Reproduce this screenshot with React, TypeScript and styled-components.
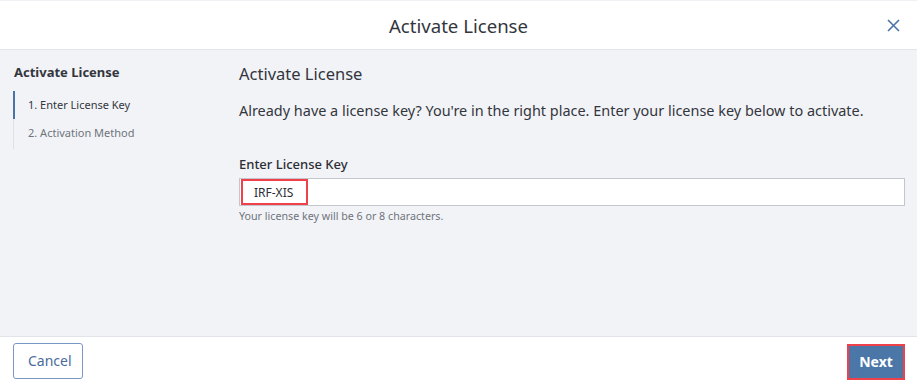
import styled, { createGlobalStyle } from 'styled-components'

const GlobalStyle = createGlobalStyle`
  html, body {
    margin: 0;
    padding: 0;
    background: #ffffff;
  }
  body {
    font-family: 'Noto Sans', 'Open Sans', sans-serif;
    color: #333740;
  }
`

const StyledDialog = styled.div`
  width: 917px;
  height: 384px;
  display: flex;
  flex-direction: column;
  background: #ffffff;
  overflow: hidden;
`

const StyledHeader = styled.header`
  height: 50px;
  flex-shrink: 0;
  display: flex;
  align-items: center;
  justify-content: center;
  position: relative;
  border-top: 1px solid #f0f1f4;
  border-bottom: 1px solid #e2e4e9;
  box-sizing: border-box;
`

const StyledTitle = styled.h1`
  margin: 0;
  font-size: 18.6px;
  font-weight: 400;
  color: #33363d;
`

const StyledClose = styled.button`
  position: absolute;
  right: 14px;
  top: 14px;
  width: 20px;
  height: 20px;
  padding: 0;
  border: none;
  background: none;
  display: flex;
  align-items: center;
  justify-content: center;
  color: #4a74a8;
  cursor: pointer;
`

const StyledBody = styled.div`
  flex: 1;
  display: flex;
  background: #f2f3f7;
  padding: 13px 12px 0 13px;
`

const StyledNav = styled.nav`
  width: 226px;
  flex-shrink: 0;
`

const StyledNavTitle = styled.div`
  font-size: 13px;
  font-weight: 700;
  color: #33363d;
  padding-left: 1px;
  margin-bottom: 10px;
  line-height: 18px;
`

const StyledSteps = styled.ol`
  list-style: none;
  margin: 0;
  padding: 0 0 2px;
  border-left: 1px solid #dfe1e6;
`

const StyledStep = styled.li<{ $active?: boolean }>`
  font-size: 11px;
  line-height: 14px;
  padding: 7px 0 7px 13px;
  margin-left: -1px;
  border-left: 2px solid ${(p) => (p.$active ? '#4a74a8' : 'transparent')};
  color: ${(p) => (p.$active ? '#33363d' : '#6f737c')};
`

const StyledMain = styled.main`
  flex: 1;
  display: flex;
  flex-direction: column;
`

const StyledHeading = styled.h2`
  margin: 0;
  font-size: 16.5px;
  font-weight: 400;
  color: #33363d;
  line-height: 22px;
`

const StyledLead = styled.p`
  margin: 16px 0 0;
  font-size: 14.45px;
  line-height: 20px;
  color: #33363d;
`

const StyledLabel = styled.label`
  margin-top: 34px;
  font-size: 13px;
  font-weight: 500;
  line-height: 18px;
  color: #2b2e34;
`

const StyledInputWrap = styled.div`
  margin-top: 5px;
  height: 28px;
  box-sizing: border-box;
  border: 1px solid #c3c6cc;
  background: #ffffff;
  display: flex;
  align-items: center;
  position: relative;
`

const StyledInputValue = styled.span`
  font-size: 12px;
  color: #2b2e34;
  padding-left: 14px;
`

const StyledHighlight = styled.span`
  position: absolute;
  left: 1px;
  top: 0px;
  width: 67px;
  height: 26px;
  box-sizing: border-box;
  border: 2px solid #f0414a;
`

const StyledHelp = styled.div`
  margin-top: 3px;
  font-size: 10.7px;
  line-height: 14px;
  color: #6f737c;
`

const StyledFooter = styled.footer`
  height: 48px;
  flex-shrink: 0;
  display: flex;
  align-items: center;
  justify-content: space-between;
  padding: 0 12px 0 13px;
  border-top: 1px solid #e2e4e9;
  box-sizing: border-box;
`

const StyledButton = styled.button<{ $primary?: boolean }>`
  height: 36px;
  padding: 0 14px;
  font-family: inherit;
  font-size: 14px;
  border-radius: 3px;
  cursor: pointer;
  box-sizing: border-box;
  ${(p) =>
    p.$primary
      ? `
    background: #4a76a8;
    color: #ffffff;
    font-weight: 700;
    border: 2px solid #f0414a;
    border-radius: 0;
    height: 36px;
    width: 58px;
    padding: 0;
    margin-top: 2px;
  `
      : `
    background: #ffffff;
    color: #4a6c9c;
    border: 1px solid #7a97c4;
    width: 70px;
  `}
`

export default function App() {
  return (
    <>
      <GlobalStyle />
      <StyledDialog>
        <StyledHeader>
          <StyledTitle>Activate License</StyledTitle>
          <StyledClose aria-label="Close">
            <svg width="13" height="13" viewBox="0 0 13 13" fill="none">
              <path d="M1 1L12 12M12 1L1 12" stroke="currentColor" strokeWidth="1.6" />
            </svg>
          </StyledClose>
        </StyledHeader>
        <StyledBody>
          <StyledNav>
            <StyledNavTitle>Activate License</StyledNavTitle>
            <StyledSteps>
              <StyledStep $active>1. Enter License Key</StyledStep>
              <StyledStep>2. Activation Method</StyledStep>
            </StyledSteps>
          </StyledNav>
          <StyledMain>
            <StyledHeading>Activate License</StyledHeading>
            <StyledLead>
              Already have a license key? You're in the right place. Enter your license key below to
              activate.
            </StyledLead>
            <StyledLabel>Enter License Key</StyledLabel>
            <StyledInputWrap>
              <StyledInputValue>IRF-XIS</StyledInputValue>
              <StyledHighlight />
            </StyledInputWrap>
            <StyledHelp>Your license key will be 6 or 8 characters.</StyledHelp>
          </StyledMain>
        </StyledBody>
        <StyledFooter>
          <StyledButton>Cancel</StyledButton>
          <StyledButton $primary>Next</StyledButton>
        </StyledFooter>
      </StyledDialog>
    </>
  )
}
